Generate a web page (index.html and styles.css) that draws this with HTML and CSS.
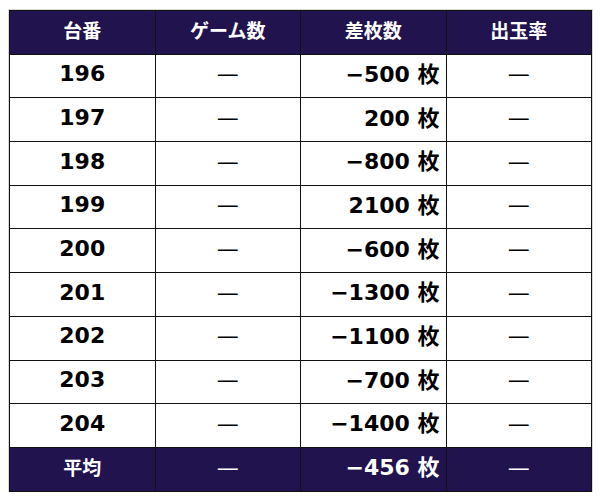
FILE: index.html
```html
<!DOCTYPE html>
<html lang="ja">
<head>
<meta charset="utf-8">
<link rel="stylesheet" href="styles.css">
</head>
<body>
<table class="data">
  <colgroup><col class="c"><col class="c"><col class="c"><col class="c"></colgroup>
  <thead>
    <tr class="head"><th>台番</th><th>ゲーム数</th><th>差枚数</th><th>出玉率</th></tr>
  </thead>
  <tbody>
    <tr><td class="num">196</td><td class="dash">—</td><td class="diff">−500 <span class="unit">枚</span></td><td class="dash">—</td></tr>
    <tr><td class="num">197</td><td class="dash">—</td><td class="diff">200 <span class="unit">枚</span></td><td class="dash">—</td></tr>
    <tr><td class="num">198</td><td class="dash">—</td><td class="diff">−800 <span class="unit">枚</span></td><td class="dash">—</td></tr>
    <tr><td class="num">199</td><td class="dash">—</td><td class="diff">2100 <span class="unit">枚</span></td><td class="dash">—</td></tr>
    <tr><td class="num">200</td><td class="dash">—</td><td class="diff">−600 <span class="unit">枚</span></td><td class="dash">—</td></tr>
    <tr><td class="num">201</td><td class="dash">—</td><td class="diff">−1300 <span class="unit">枚</span></td><td class="dash">—</td></tr>
    <tr><td class="num">202</td><td class="dash">—</td><td class="diff">−1100 <span class="unit">枚</span></td><td class="dash">—</td></tr>
    <tr><td class="num">203</td><td class="dash">—</td><td class="diff">−700 <span class="unit">枚</span></td><td class="dash">—</td></tr>
    <tr><td class="num">204</td><td class="dash">—</td><td class="diff">−1400 <span class="unit">枚</span></td><td class="dash">—</td></tr>
  </tbody>
  <tfoot>
    <tr class="foot"><th>平均</th><td class="dash">—</td><td class="diff">−456 <span class="unit">枚</span></td><td class="dash">—</td></tr>
  </tfoot>
</table>
</body>
</html>
```

FILE: styles.css
```css
html, body {
  margin: 0;
  padding: 0;
  background: #fff;
}

.data {
  margin: 10px 0 0 9px;
  width: 583px;
  border-collapse: collapse;
  table-layout: fixed;
  font-family: "DejaVu Sans", "Noto Sans CJK JP", sans-serif;
  box-shadow: 0 0 0 1px #d8d8d8;
}

.c { width: 25%; }

.data tr { height: 43.7px; }

.data th,
.data td {
  border: 1px solid #111;
  padding: 0 0 3px 0;
  vertical-align: middle;
  line-height: 1.2;
}

.data th {
  font-family: "Noto Sans CJK JP", sans-serif;
  font-weight: 700;
  font-size: 19px;
  color: #fff;
  text-align: center;
}

.head,
.foot {
  background: #21134e;
}

.num {
  font-size: 22px;
  font-weight: 700;
  color: #000;
  text-align: center;
}

.dash {
  font-family: "DejaVu Sans", sans-serif;
  font-size: 22px;
  font-weight: 400;
  text-align: center;
  color: #000;
}

.diff {
  font-size: 22px;
  font-weight: 700;
  color: #000;
  text-align: right;
  padding-right: 6px !important;
}

.unit {
  font-family: "Noto Sans CJK JP", sans-serif;
  font-weight: 700;
  line-height: 1;
}

.foot .dash,
.foot .diff {
  color: #fff;
}
```
